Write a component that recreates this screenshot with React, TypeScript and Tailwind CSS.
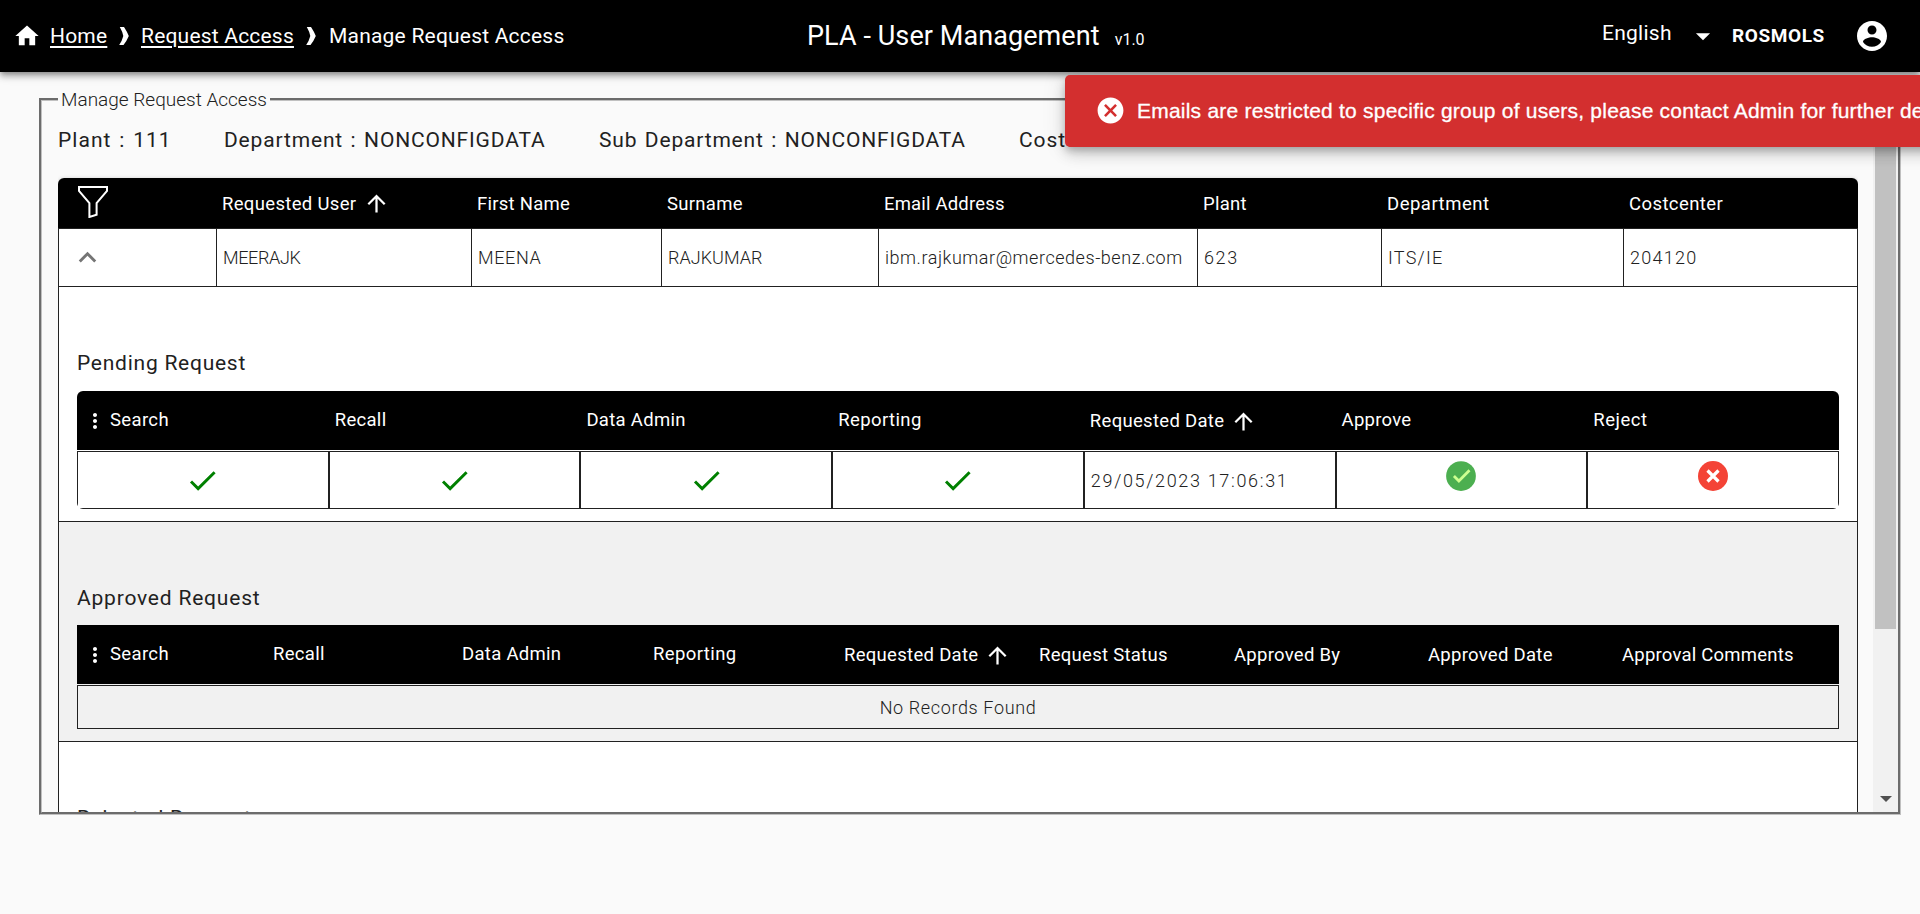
import React from "react";
import { FcOk } from "react-icons/fc";

const Glyph = ({ d, className }: { d: string; className: string }) => (
  <svg viewBox="0 0 24 24" fill="currentColor" className={`shrink-0 ${className}`}>
    <path d={d} />
  </svg>
);

const ICON = {
  home: "M10 20v-6h4v6h5v-8h3L12 3 2 12h3v8z",
  up: "M4 12l1.41 1.41L11 7.83V20h2V7.83l5.58 5.59L20 12l-8-8-8 8z",
  less: "M12 8l-6 6 1.41 1.41L12 10.83l4.59 4.58L18 14z",
  more: "M12 8c1.1 0 2-.9 2-2s-.9-2-2-2-2 .9-2 2 .9 2 2 2zm0 2c-1.1 0-2 .9-2 2s.9 2 2 2 2-.9 2-2-.9-2-2-2zm0 6c-1.1 0-2 .9-2 2s.9 2 2 2 2-.9 2-2-.9-2-2-2z",
  check: "M9 16.17L4.83 12l-1.42 1.41L9 19 21 7l-1.41-1.41z",
  drop: "M7 10l5 5 5-5z",
  cancel:
    "M12 2C6.47 2 2 6.47 2 12s4.47 10 10 10 10-4.47 10-10S17.53 2 12 2zm5 13.59L15.59 17 12 13.41 8.41 17 7 15.59 10.59 12 7 8.41 8.41 7 12 10.59 15.59 7 17 8.41 13.41 12 17 15.59z",
  account:
    "M12 2C6.48 2 2 6.48 2 12s4.48 10 10 10 10-4.48 10-10S17.52 2 12 2zm0 3c1.66 0 3 1.34 3 3s-1.34 3-3 3-3-1.34-3-3 1.34-3 3-3zm0 14.2c-2.5 0-4.71-1.28-6-3.22.03-1.99 4-3.08 6-3.08 1.99 0 5.97 1.09 6 3.08-1.29 1.94-3.5 3.22-6 3.22z",
};

const Separator = () => (
  <svg viewBox="0 0 10 18" className="h-[18px] w-[10px] shrink-0 fill-white">
    <path d="M0.800 0H5Q8 4.500 9.800 9 8 13.500 4.500 18H0.200Q3.200 13.500 4.300 9 3.400 4.500 0.800 0Z" />
  </svg>
);

const FilterIcon = () => (
  <svg viewBox="0 0 30 32" className="h-[32px] w-[30px] shrink-0 fill-none stroke-white" strokeWidth="2">
    <path d="M1 1H29V5L18.600 17V28.700L11.400 31V17L1 5Z" />
  </svg>
);

const RejectIcon = () => (
  <svg viewBox="0 0 30 30" className="size-[30px]">
    <circle cx="15" cy="15" r="15" fill="#f44336" />
    <path d="M9.500 9.500L20.500 20.500M20.500 9.500L9.500 20.500" stroke="#fff" strokeWidth="3.2" />
  </svg>
);

const MAIN_COLS = "grid grid-cols-[158px_255px_190px_217px_319px_184px_242px_1fr]";
const HEAD = "flex items-center pl-[6px] text-[18.5px]";

type Item = { label: string; cls: string };

const mainHead: Item[] = [
  { label: "First Name", cls: "tracking-[0.25px]" },
  { label: "Surname", cls: "tracking-[0.3px]" },
  { label: "Email Address", cls: "tracking-[0.18px]" },
  { label: "Plant", cls: "tracking-[0.25px]" },
  { label: "Department", cls: "tracking-[0.5px]" },
  { label: "Costcenter", cls: "tracking-[0.42px]" },
];

const mainRow: Item[] = [
  { label: "MEERAJK", cls: "tracking-[-0.36px]" },
  { label: "MEENA", cls: "tracking-[0.65px]" },
  { label: "RAJKUMAR", cls: "tracking-[0.03px]" },
  { label: "ibm.rajkumar@mercedes-benz.com", cls: "tracking-[0.54px]" },
  { label: "623", cls: "tracking-[1.6px]" },
  { label: "ITS/IE", cls: "tracking-[1.24px]" },
  { label: "204120", cls: "tracking-[1.28px]" },
];

const permissions: Item[] = [
  { label: "Recall", cls: "tracking-[0.3px]" },
  { label: "Data Admin", cls: "tracking-[0.3px]" },
  { label: "Reporting", cls: "tracking-[0.4px]" },
];

const approvals: Item[] = [
  { label: "Request Status", cls: "tracking-[0.28px]" },
  { label: "Approved By", cls: "tracking-[0.28px]" },
  { label: "Approved Date", cls: "tracking-[0.28px]" },
  { label: "Approval Comments", cls: "tracking-[0.22px]" },
];

const SearchHead = () => (
  <div className="flex items-center pl-[6px] text-[18.5px] tracking-[0.35px]">
    <Glyph d={ICON.more} className="size-[24px]" />
    <span className="ml-[3px] pt-[1px]">Search</span>
  </div>
);

const RequestedDateHead = () => (
  <div className={`${HEAD} tracking-[0.3px]`}>
    <span className="pt-[3px]">Requested Date</span>
    <Glyph d={ICON.up} className="mt-[2px] ml-[6px] size-[27px]" />
  </div>
);

const CheckCell = () => (
  <div className="flex items-center justify-center border border-[#212121]">
    <Glyph d={ICON.check} className="size-[35px] text-[#008000]" />
  </div>
);

function Header() {
  return (
    <header className="relative z-10 flex h-[72px] items-center bg-black text-[21px] text-white shadow-[0_2px_5px_-1px_rgba(0,0,0,0.3),0_5px_6px_rgba(0,0,0,0.2),0_1px_13px_rgba(0,0,0,0.14)]">
      <nav className="flex w-[807px] items-center pl-[13px]">
        <Glyph d={ICON.home} className="size-[28px]" />
        <a className="ml-[9px] w-[69px] pt-[2px] tracking-[0.2px] underline decoration-2 underline-offset-[3px]">Home</a>
        <Separator />
        <a className="ml-[12px] w-[165px] pt-[2px] tracking-[0.2px] underline decoration-2 underline-offset-[3px]">Request Access</a>
        <Separator />
        <span className="ml-[13px] pt-[2px] tracking-[0.21px]">Manage Request Access</span>
      </nav>
      <div className="flex w-[795px] items-center">
        <h1 className="pt-[1px] text-[27px] tracking-[0.08px]">PLA - User Management</h1>
        <span className="ml-[15px] pt-[7px] text-[16px]">v1.0</span>
      </div>
      <span className="w-[84px] pb-[4px] tracking-[0.25px]">English</span>
      <Glyph d={ICON.drop} className="size-[34px]" />
      <span className="ml-[12px] w-[122px] text-[19px] font-bold tracking-[0.6px]">ROSMOLS</span>
      <Glyph d={ICON.account} className="size-[36px]" />
    </header>
  );
}

function Toast() {
  return (
    <div
      role="alert"
      className="absolute top-[75px] left-[1065px] z-20 flex h-[72px] w-[920px] items-center rounded-[5px] bg-[#d32f2f] pb-[1px] pl-[30px] text-white shadow-[0_4px_7px_-1px_rgba(0,0,0,0.2),0_8px_13px_rgba(0,0,0,0.14),0_1px_24px_rgba(0,0,0,0.12)]"
    >
      <Glyph d={ICON.cancel} className="size-[31px]" />
      <p className="ml-[11px] font-['Liberation_Sans',sans-serif] text-[21px] tracking-[0.22px] whitespace-nowrap [-webkit-text-stroke:0.3px_white]">
        Emails are restricted to specific group of users, please contact Admin for further details
      </p>
    </div>
  );
}

function PendingPanel() {
  return (
    <section className="border-b border-[#212121] px-[18px] pb-[12px]">
      <h2 className="pt-[62px] text-[21px] leading-[28px] tracking-[0.75px]">Pending Request</h2>
      <div className="mt-[14px] overflow-hidden rounded-[6px]">
        <div className="grid h-[59px] grid-cols-7 bg-black text-white">
          <SearchHead />
          {permissions.map((p) => (
            <div key={p.label} className={`${HEAD} pt-[1px] ${p.cls}`}>{p.label}</div>
          ))}
          <RequestedDateHead />
          <div className={`${HEAD} pt-[1px] tracking-[0.25px]`}>Approve</div>
          <div className={`${HEAD} pt-[1px] tracking-[0.5px]`}>Reject</div>
        </div>
        <div className="mt-px grid h-[58px] grid-cols-7">
          <CheckCell />
          <CheckCell />
          <CheckCell />
          <CheckCell />
          <div className="flex items-center border border-[#212121] pl-[6px] text-[18px] font-light tracking-[1.66px]">29/05/2023 17:06:31</div>
          <div className="flex items-center justify-center border border-[#212121] pb-[8px]">
            <FcOk className="size-[34px]" />
          </div>
          <div className="flex items-center justify-center border border-[#212121] pb-[8px]">
            <RejectIcon />
          </div>
        </div>
      </div>
    </section>
  );
}

function ApprovedPanel() {
  return (
    <section className="border-b border-[#212121] bg-[#f1f1f1] px-[18px] pb-[12px]">
      <h2 className="pt-[62px] text-[21px] leading-[28px] tracking-[0.8px]">Approved Request</h2>
      <div className="mt-[13px] grid h-[59px] grid-cols-[190px_189px_191px_191px_195px_195px_194px_194px_1fr] bg-black whitespace-nowrap text-white">
        <SearchHead />
        {permissions.map((p) => (
          <div key={p.label} className={`${HEAD} pt-[1px] ${p.cls}`}>{p.label}</div>
        ))}
        <RequestedDateHead />
        {approvals.map((p) => (
          <div key={p.label} className={`${HEAD} pt-[3px] ${p.cls}`}>{p.label}</div>
        ))}
      </div>
      <div className="mt-px flex h-[44px] items-center justify-center border border-[#212121] text-[18px] font-light tracking-[0.63px]">
        No Records Found
      </div>
    </section>
  );
}

function Scrollbar() {
  return (
    <div className="ml-[15px] flex w-[25px] flex-col items-center bg-[#f1f1f1]">
      <div className="h-[517px] w-[21px] bg-[#c1c1c1]" />
      <svg viewBox="0 0 12 6" className="mt-auto mb-[10px] h-[6px] w-[12px] fill-[#505050]">
        <path d="M0 0H12L6 6Z" />
      </svg>
    </div>
  );
}

export default function App() {
  return (
    <div className="relative h-[914px] w-[1920px] overflow-hidden bg-[#fafafa] font-[Roboto,sans-serif] text-[#212121]">
      <Header />
      <Toast />
      <fieldset className="mt-[15px] ml-[39px] h-[728px] w-[1862px] border-3 border-[#c0c0c0] [border-style:groove]">
        <legend className="ml-[16px] h-[25px] w-[212px] pl-[3px] text-[19px] leading-[25px] font-light whitespace-nowrap">
          Manage Request Access
        </legend>
        <div className="flex h-[700px] pl-[16px]">
          <div className="h-[700px] w-[1800px] overflow-clip">
            <div className="flex h-[66px] items-center pb-[8px] text-[21px] whitespace-nowrap [word-spacing:1.5px]">
              <span className="w-[166px] tracking-[1.05px]">Plant : 111</span>
              <span className="w-[375px] tracking-[0.84px]">Department : NONCONFIGDATA</span>
              <span className="w-[420px] tracking-[0.82px]">Sub Department : NONCONFIGDATA</span>
              <span className="tracking-[0.92px]">Costcenter : NONCONFIGD</span>
            </div>
            <div className="h-[800px] rounded-t-[6px] shadow-[0_1px_4px_rgba(0,0,0,0.25)]">
              <div className={`${MAIN_COLS} h-[50px] rounded-t-[6px] bg-black text-white`}>
                <div className="flex items-center pb-[2px] pl-[20px]">
                  <FilterIcon />
                </div>
                <div className={`${HEAD} tracking-[0.33px]`}>
                  <span className="pt-[3px]">Requested User</span>
                  <Glyph d={ICON.up} className="mt-[1px] ml-[7px] size-[27px]" />
                </div>
                {mainHead.map((h) => (
                  <div key={h.label} className={`${HEAD} pt-[3px] ${h.cls}`}>{h.label}</div>
                ))}
              </div>
              <div className={`${MAIN_COLS} h-[59px] border border-[#212121] bg-white`}>
                <div className="flex items-center pb-[1px] pl-[11px]">
                  <Glyph d={ICON.less} className="size-[35px] text-[#757575]" />
                </div>
                {mainRow.map((c) => (
                  <div key={c.label} className={`-ml-px flex items-center border-l border-[#212121] pb-[1px] pl-[6px] text-[18px] font-light ${c.cls}`}>
                    {c.label}
                  </div>
                ))}
              </div>
              <div className="h-[691px] border-x border-[#212121] bg-white">
                <PendingPanel />
                <ApprovedPanel />
                <section className="px-[18px]">
                  <h2 className="pt-[62px] text-[21px] leading-[28px] tracking-[0.75px]">Rejected Request</h2>
                </section>
              </div>
            </div>
          </div>
          <Scrollbar />
        </div>
      </fieldset>
    </div>
  );
}
